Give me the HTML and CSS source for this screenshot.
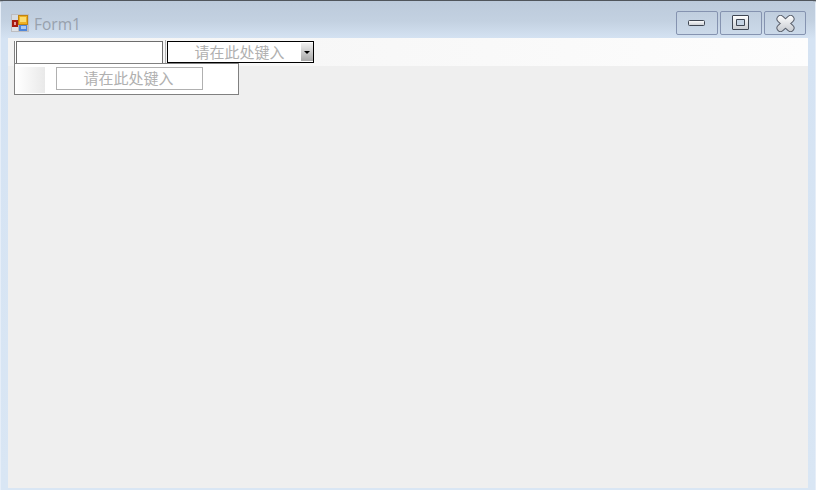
FILE: index.html
```html
<!DOCTYPE html>
<html lang="zh">
<head>
<meta charset="utf-8">
<title>Form1</title>
<link rel="stylesheet" href="styles.css">
</head>
<body>
<div class="window">
  <header class="titlebar">
    <svg class="app-icon" width="18" height="18" viewBox="0 0 18 18">
      <rect width="18" height="18" fill="#bdbdc0"/>
      <rect x="1" y="1" width="6" height="5" fill="#d6dbe2"/>
      <rect x="1" y="13" width="6" height="4" fill="#dfe2e6"/>
      <rect x="1" y="6" width="6" height="7" fill="#a81c10"/>
      <rect x="3" y="8" width="2" height="3" fill="#e8a0a0"/>
      <rect x="7.500" y="1.500" width="9" height="9" fill="#f0b020" stroke="#c08410" stroke-width="1"/>
      <rect x="9" y="3" width="6" height="5" fill="#fbdc70"/>
      <rect x="8" y="11" width="8" height="6" fill="#4f86d8"/>
      <rect x="10" y="12" width="5" height="3" fill="#a9c8f2"/>
    </svg>
    <span class="title">Form1</span>
    <div class="controls">
      <button class="ctl" type="button" aria-label="最小化">
        <svg width="18" height="7" viewBox="0 0 18 7"><defs><linearGradient id="g" x1="0" y1="0" x2="0" y2="1"><stop offset="0" stop-color="#fff"/><stop offset="1" stop-color="#c9cdd3"/></linearGradient></defs><rect x="0.500" y="0.500" width="16" height="5" rx="1" fill="url(#g)" stroke="#3f4652"/></svg>
      </button>
      <button class="ctl" type="button" aria-label="最大化">
        <svg width="18" height="16" viewBox="0 0 18 16"><path fill-rule="evenodd" d="M1 .5h15a.5.5 0 0 1 .5.5v13a.5.5 0 0 1-.5.5H1a.5.5 0 0 1-.5-.5V1A.5.5 0 0 1 1 .5zM4.500 4.500v6h8v-6z" fill="url(#g)" stroke="#3f4652"/></svg>
      </button>
      <button class="ctl" type="button" aria-label="关闭">
        <svg width="19" height="17" viewBox="0 0 19 17"><defs><linearGradient id="x" gradientUnits="userSpaceOnUse" x1="0" y1="0" x2="0" y2="17"><stop offset="0" stop-color="#fff"/><stop offset="1" stop-color="#c4c8ce"/></linearGradient></defs><path d="M4.500 4 14.500 13M14.500 4 4.500 13" stroke="#5a606c" stroke-width="8" stroke-linecap="round" fill="none"/><path d="M4.500 4 14.500 13M14.500 4 4.500 13" stroke="url(#x)" stroke-width="6" stroke-linecap="round" fill="none"/></svg>
      </button>
    </div>
  </header>
  <main class="client">
    <div class="toolbar">
      <div class="menu-strip">
        <div class="textbox"></div>
        <div class="sep"></div>
        <div class="combo">
          <span class="hint">请在此处键入</span>
          <span class="combo-btn"><i class="arrow"></i></span>
        </div>
      </div>
      <div class="dropdown">
        <div class="image-margin"></div>
        <div class="item-box"><span class="hint">请在此处键入</span></div>
      </div>
    </div>
  </main>
</div>
</body>
</html>
```
FILE: styles.css
```css
* { box-sizing: border-box; }
html, body { margin: 0; padding: 0; }
body { width: 816px; height: 490px; overflow: hidden; background: #50555c; }

.window {
  width: 816px;
  height: 490px;
  display: flex;
  flex-direction: column;
  padding: 0 7px 2px;
  border-top: 1px solid #50555c;
  border-left: 1px solid #e6eef8;
  border-right: 1px solid #e6eef8;
  border-radius: 3px 3px 0 0;
  background: linear-gradient(#bccadb 0, #c3d1e1 20px, #d5e3f3 38px, #d9e6f4 100%);
}

.titlebar {
  height: 37px;
  flex: none;
  display: flex;
  align-items: flex-start;
}
.app-icon { margin: 13px 0 0 3px; flex: none; }
.title {
  margin: 12px 0 0 5px;
  font: 15.500px/22px "Open Sans", sans-serif;
  color: #98a1ad;
}
.controls {
  margin: 10px 2px 0 auto;
  display: flex;
  gap: 2px;
}
.ctl {
  width: 42px;
  height: 24px;
  padding: 0;
  display: flex;
  align-items: center;
  justify-content: center;
  border: 1px solid #8593b0;
  border-radius: 2px;
  background: linear-gradient(#c0cede, #cbd9e9);
}

.client { flex: 1; background: #efefef; }

.toolbar {
  position: relative;
  height: 28px;
  background: linear-gradient(90deg, #f4f4f4, #f9f9f9 60%, #fdfdfd);
}
.menu-strip {
  display: flex;
  align-items: flex-start;
  padding: 1px 0 0 8px;
}
.textbox {
  width: 147px;
  height: 24px;
  margin-top: 2px;
  border: 1px solid #6d6d6d;
  background: #fff;
  box-shadow: -1px 0 0 #fff, -2px 0 0 #808080;
}
.sep {
  width: 1px;
  height: 24px;
  margin: 1px 1px 0 2px;
  background: #b4b4b4;
}
.combo {
  position: relative;
  width: 147px;
  height: 22px;
  margin-top: 2px;
  padding-right: 2px;
  display: flex;
  align-items: center;
  justify-content: center;
  border: 1px solid #000;
  background: #fff;
}
.combo-btn {
  position: absolute;
  top: 1px;
  right: 0;
  width: 12px;
  height: 18px;
  display: flex;
  align-items: center;
  justify-content: center;
  background: linear-gradient(#f0f0f0, #a8a8a8);
}
.arrow {
  width: 0;
  height: 0;
  border: 3px solid transparent;
  border-top: 3px solid #000;
  border-bottom: 0;
}
.hint {
  font: 15px/20px "Noto Sans CJK SC", "Liberation Sans", sans-serif;
  color: #b0b0b0;
}

.dropdown {
  position: absolute;
  left: 6px;
  top: 25px;
  width: 225px;
  height: 32px;
  display: flex;
  align-items: flex-start;
  padding: 3px 0 0 1px;
  border: 1px solid #808080;
  background: #fff;
}
.image-margin {
  width: 29px;
  height: 26px;
  background: linear-gradient(90deg, #fff, #e9e9e9);
}
.item-box {
  width: 147px;
  height: 23px;
  margin-left: 11px;
  padding: 0 2px 2px 0;
  display: flex;
  align-items: center;
  justify-content: center;
  border: 1px solid #b0b0b0;
  background: #fff;
}
```
